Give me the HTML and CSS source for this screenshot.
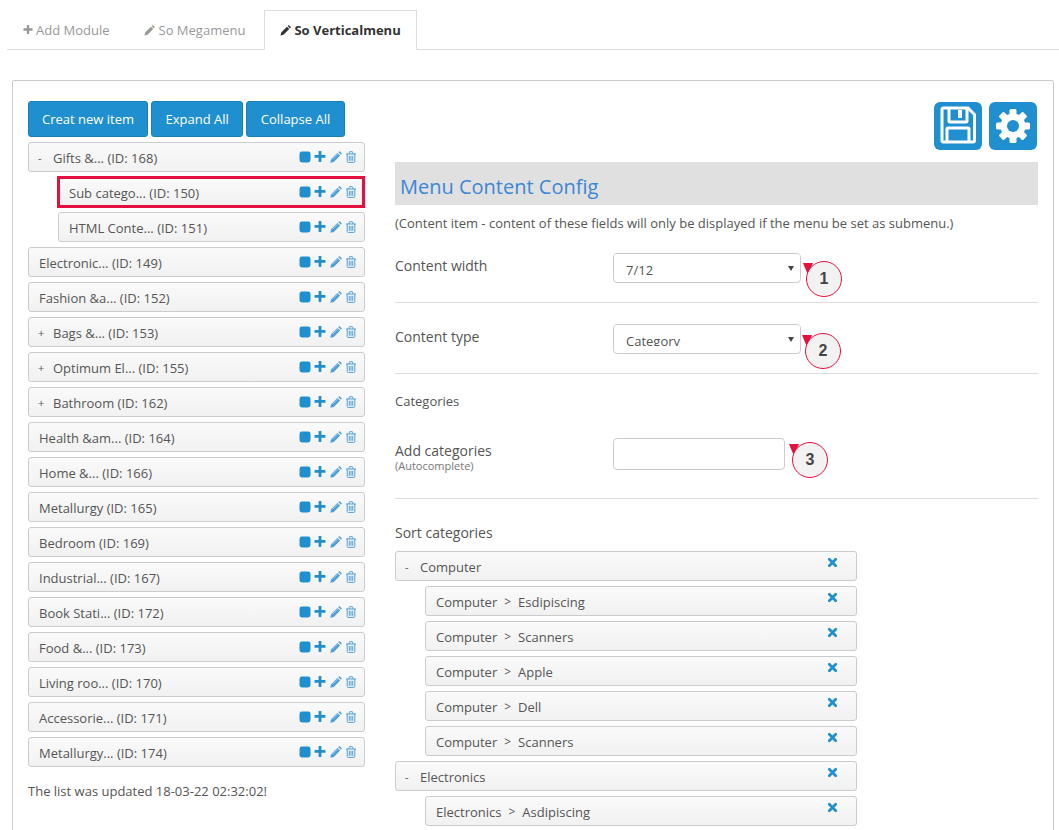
FILE: index.html
```html
<!DOCTYPE html>
<html lang="en">
<head>
  <meta charset="UTF-8" />
  <meta name="viewport" content="width=device-width, initial-scale=1.0" />
  <title>So Verticalmenu</title>
  <link rel="stylesheet" href="styles.css">
</head>
<body>
  <svg class="sprite" width="0" height="0">
    <symbol id="i-square" viewBox="0 0 12 12"><rect x="0.5" y="0.5" width="11" height="11" rx="2.4" fill="currentColor"/></symbol>
    <symbol id="i-plus" viewBox="0 0.6 12 12"><path d="M4.6 1.1q0-.6.6-.6h1.6q.6 0 .6.6v3.5h3.5q.6 0 .6.6v1.6q0 .6-.6.6H7.4v3.5q0 .6-.6.6H5.2q-.6 0-.6-.6V7.400H1.100q-.6 0-.6-.6V5.200q0-.6.6-.6h3.500z" fill="currentColor"/></symbol>
    <symbol id="i-pencil" viewBox="0 0 12 12"><path d="M0.300 11.700l.8-3.500 6.300-6.300 2.700 2.700-6.300 6.300zM8.200 1.100l.7-.6q.5-.4 1 0l1.600 1.600q.4.5 0 1l-.6.7z" fill="currentColor"/><path d="M2.400 8.300l5.400-5.400" stroke="#fff" stroke-width=".5"/></symbol>
    <symbol id="i-trash" viewBox="0 0 12 12"><path d="M1 3h10M2.200 3v7.400q0 1 1 1h5.600q1 0 1-1V3M4.200 3V1.400q0-.7.7-.7h2.200q.7 0 .7.7V3M4.300 4.800v5M6 4.800v5M7.700 4.800v5" fill="none" stroke="currentColor" stroke-width="1"/></symbol>
    <symbol id="i-edit" viewBox="0 0 12 12"><path d="M0.500 11.500l.8-3.300L7.600 1.900l2.500 2.500-6.300 6.300zM8.300 1.200l.7-.7q.5-.4 1 0l1.500 1.500q.4.5 0 1l-.7.700z" fill="currentColor"/></symbol>
    <symbol id="i-times" viewBox="0 0 12 12"><path d="M2.500 2.500l7 7M9.500 2.500l-7 7" stroke="currentColor" stroke-width="3" stroke-linecap="round"/></symbol>
  </svg>

  <ul class="tabs">
    <li><svg class="tab-ico add"><use href="#i-plus"/></svg>Add Module</li>
    <li><svg class="tab-ico"><use href="#i-edit"/></svg>So Megamenu</li>
    <li class="active"><svg class="tab-ico"><use href="#i-edit"/></svg>So Verticalmenu</li>
  </ul>

  <div class="panel">
    <div class="left-col">
      <div class="btn-row">
        <button class="btn">Creat new item</button>
        <button class="btn">Expand All</button>
        <button class="btn">Collapse All</button>
      </div>
      <ul class="tree">
        <li class="node"><span class="sign">-</span>Gifts &amp;... (ID: 168)<span class="acts"><svg><use href="#i-square"/></svg><svg><use href="#i-plus"/></svg><svg class="light"><use href="#i-pencil"/></svg><svg class="light"><use href="#i-trash"/></svg></span></li>
        <li class="node sub marked">Sub catego... (ID: 150)<span class="acts"><svg><use href="#i-square"/></svg><svg><use href="#i-plus"/></svg><svg class="light"><use href="#i-pencil"/></svg><svg class="light"><use href="#i-trash"/></svg></span></li>
        <li class="node sub">HTML Conte... (ID: 151)<span class="acts"><svg><use href="#i-square"/></svg><svg><use href="#i-plus"/></svg><svg class="light"><use href="#i-pencil"/></svg><svg class="light"><use href="#i-trash"/></svg></span></li>
        <li class="node">Electronic... (ID: 149)<span class="acts"><svg><use href="#i-square"/></svg><svg><use href="#i-plus"/></svg><svg class="light"><use href="#i-pencil"/></svg><svg class="light"><use href="#i-trash"/></svg></span></li>
        <li class="node">Fashion &amp;a... (ID: 152)<span class="acts"><svg><use href="#i-square"/></svg><svg><use href="#i-plus"/></svg><svg class="light"><use href="#i-pencil"/></svg><svg class="light"><use href="#i-trash"/></svg></span></li>
        <li class="node"><span class="sign">+</span>Bags &amp;... (ID: 153)<span class="acts"><svg><use href="#i-square"/></svg><svg><use href="#i-plus"/></svg><svg class="light"><use href="#i-pencil"/></svg><svg class="light"><use href="#i-trash"/></svg></span></li>
        <li class="node"><span class="sign">+</span>Optimum El... (ID: 155)<span class="acts"><svg><use href="#i-square"/></svg><svg><use href="#i-plus"/></svg><svg class="light"><use href="#i-pencil"/></svg><svg class="light"><use href="#i-trash"/></svg></span></li>
        <li class="node"><span class="sign">+</span>Bathroom (ID: 162)<span class="acts"><svg><use href="#i-square"/></svg><svg><use href="#i-plus"/></svg><svg class="light"><use href="#i-pencil"/></svg><svg class="light"><use href="#i-trash"/></svg></span></li>
        <li class="node">Health &amp;am... (ID: 164)<span class="acts"><svg><use href="#i-square"/></svg><svg><use href="#i-plus"/></svg><svg class="light"><use href="#i-pencil"/></svg><svg class="light"><use href="#i-trash"/></svg></span></li>
        <li class="node">Home &amp;... (ID: 166)<span class="acts"><svg><use href="#i-square"/></svg><svg><use href="#i-plus"/></svg><svg class="light"><use href="#i-pencil"/></svg><svg class="light"><use href="#i-trash"/></svg></span></li>
        <li class="node">Metallurgy (ID: 165)<span class="acts"><svg><use href="#i-square"/></svg><svg><use href="#i-plus"/></svg><svg class="light"><use href="#i-pencil"/></svg><svg class="light"><use href="#i-trash"/></svg></span></li>
        <li class="node">Bedroom (ID: 169)<span class="acts"><svg><use href="#i-square"/></svg><svg><use href="#i-plus"/></svg><svg class="light"><use href="#i-pencil"/></svg><svg class="light"><use href="#i-trash"/></svg></span></li>
        <li class="node">Industrial... (ID: 167)<span class="acts"><svg><use href="#i-square"/></svg><svg><use href="#i-plus"/></svg><svg class="light"><use href="#i-pencil"/></svg><svg class="light"><use href="#i-trash"/></svg></span></li>
        <li class="node">Book Stati... (ID: 172)<span class="acts"><svg><use href="#i-square"/></svg><svg><use href="#i-plus"/></svg><svg class="light"><use href="#i-pencil"/></svg><svg class="light"><use href="#i-trash"/></svg></span></li>
        <li class="node">Food &amp;... (ID: 173)<span class="acts"><svg><use href="#i-square"/></svg><svg><use href="#i-plus"/></svg><svg class="light"><use href="#i-pencil"/></svg><svg class="light"><use href="#i-trash"/></svg></span></li>
        <li class="node">Living roo... (ID: 170)<span class="acts"><svg><use href="#i-square"/></svg><svg><use href="#i-plus"/></svg><svg class="light"><use href="#i-pencil"/></svg><svg class="light"><use href="#i-trash"/></svg></span></li>
        <li class="node">Accessorie... (ID: 171)<span class="acts"><svg><use href="#i-square"/></svg><svg><use href="#i-plus"/></svg><svg class="light"><use href="#i-pencil"/></svg><svg class="light"><use href="#i-trash"/></svg></span></li>
        <li class="node">Metallurgy... (ID: 174)<span class="acts"><svg><use href="#i-square"/></svg><svg><use href="#i-plus"/></svg><svg class="light"><use href="#i-pencil"/></svg><svg class="light"><use href="#i-trash"/></svg></span></li>
      </ul>
      <p class="updated">The list was updated 18-03-22 02:32:02!</p>
    </div>

    <div class="right-col">
      <div class="toolbar">
        <button class="tool" aria-label="Save">
          <svg viewBox="0 0 48 48"><path d="M8 7.500q0-1.500 1.500-1.500H34l6.500 6.500v26q0 1.500-1.500 1.500H9.500Q8 40 8 38.500z" fill="none" stroke="#fff" stroke-width="3"/><path d="M15 6.500V19q0 1 1 1h16q1 0 1-1V6.500" fill="none" stroke="#fff" stroke-width="3"/><rect x="24" y="8" width="4" height="8" fill="#fff"/><path d="M13 39V27q0-1 1-1h20q1 0 1 1v12" fill="none" stroke="#fff" stroke-width="3"/></svg>
        </button>
        <button class="tool" aria-label="Settings">
          <svg viewBox="0 0 48 48">
            <g fill="#fff">
              <rect x="20.500" y="7" width="7" height="34" rx="1.500"/>
              <rect x="20.500" y="7" width="7" height="34" rx="1.500" transform="rotate(45 24 24)"/>
              <rect x="20.500" y="7" width="7" height="34" rx="1.500" transform="rotate(90 24 24)"/>
              <rect x="20.500" y="7" width="7" height="34" rx="1.500" transform="rotate(135 24 24)"/>
              <circle cx="24" cy="24" r="12.500"/>
            </g>
            <circle cx="24" cy="24" r="6" fill="#1f8fcf"/>
          </svg>
        </button>
      </div>

      <h2 class="config-title">Menu Content Config</h2>
      <p class="note">(Content item - content of these fields will only be displayed if the menu be set as submenu.)</p>

      <div class="form-row width-row">
        <label class="field-label">Content width</label>
        <div class="control">
          <div class="select-box"><select><option>7/12</option></select></div>
          <span class="flag"></span>
          <span class="marker">1</span>
        </div>
      </div>

      <div class="form-row type-row">
        <label class="field-label">Content type</label>
        <div class="control">
          <div class="select-box"><select><option>Category</option></select></div>
          <span class="flag"></span>
          <span class="marker">2</span>
        </div>
      </div>

      <div class="cat-head">Categories</div>

      <div class="form-row add-row">
        <label class="field-label">Add categories<small>(Autocomplete)</small></label>
        <div class="control">
          <input class="text-input" type="text">
          <span class="flag"></span>
          <span class="marker">3</span>
        </div>
      </div>

      <div class="sort-head">Sort categories</div>
      <ul class="sort-list">
        <li class="node"><span class="sign">-</span>Computer<span class="acts"><svg class="times"><use href="#i-times"/></svg></span></li>
        <li class="node sub">Computer<i class="gt">&gt;</i>Esdipiscing<span class="acts"><svg class="times"><use href="#i-times"/></svg></span></li>
        <li class="node sub">Computer<i class="gt">&gt;</i>Scanners<span class="acts"><svg class="times"><use href="#i-times"/></svg></span></li>
        <li class="node sub">Computer<i class="gt">&gt;</i>Apple<span class="acts"><svg class="times"><use href="#i-times"/></svg></span></li>
        <li class="node sub">Computer<i class="gt">&gt;</i>Dell<span class="acts"><svg class="times"><use href="#i-times"/></svg></span></li>
        <li class="node sub">Computer<i class="gt">&gt;</i>Scanners<span class="acts"><svg class="times"><use href="#i-times"/></svg></span></li>
        <li class="node"><span class="sign">-</span>Electronics<span class="acts"><svg class="times"><use href="#i-times"/></svg></span></li>
        <li class="node sub">Electronics<i class="gt">&gt;</i>Asdipiscing<span class="acts"><svg class="times"><use href="#i-times"/></svg></span></li>
      </ul>
    </div>
  </div>
</body>
</html>
```

FILE: styles.css
```css
html, body {
  height: 830px;
  overflow: hidden;
}
body {
  margin: 0;
  padding: 10px 0 0 7px;
  box-sizing: border-box;
  font-family: "Open Sans", sans-serif;
  font-size: 13px;
  color: #555;
  background: #fff;
}
ul {
  list-style: none;
  margin: 0;
  padding: 0;
}
.sprite {
  position: absolute;
}

/* tabs */
.tabs {
  display: flex;
  height: 40px;
  box-sizing: border-box;
  border-bottom: 1px solid #ddd;
}
.tabs li {
  display: flex;
  align-items: center;
  height: 40px;
  box-sizing: border-box;
  padding: 0 15px;
  margin-right: 2px;
  color: #999;
  border: 1px solid transparent;
}
.tabs li.active {
  margin-left: 1px;
  padding: 0 15px;
  background: #fff;
  color: #333;
  font-weight: 700;
  border-color: #ddd;
  border-bottom-color: #fff;
}
.tab-ico {
  width: 11px;
  height: 11px;
  margin-right: 4px;
}
.tab-ico.add {
  width: 10px;
  height: 10px;
  margin-right: 3px;
}
.tabs li.active .tab-ico {
  margin-right: 3px;
}

/* main panel */
.panel {
  display: grid;
  grid-template-columns: 337px 643px;
  column-gap: 30px;
  width: 1042px;
  box-sizing: border-box;
  margin: 30px 0 0 5px;
  padding: 20px 15px;
  border: 1px solid #ccc;
  border-radius: 2px;
  height: 900px;
}

/* buttons */
.btn-row {
  display: flex;
  gap: 3px;
  margin-bottom: 5px;
}
.btn {
  height: 36px;
  padding: 0 13px;
  border: 1px solid #1a7fb8;
  border-radius: 3px;
  background: #1f8fcf;
  color: #fff;
  font: 13px "Open Sans", sans-serif;
}
.btn + .btn {
  padding: 0 13.5px;
}

/* tree rows */
.node {
  display: flex;
  align-items: center;
  height: 30px;
  box-sizing: border-box;
  margin-bottom: 5px;
  padding: 1px 7px 0 10px;
  border: 1px solid #ccc;
  border-radius: 3px;
  background: linear-gradient(#fafafa, #f1f1f1);
  color: #555;
  white-space: pre;
}
.node.sub {
  margin-left: 30px;
}
.node.marked {
  position: relative;
}
.node.marked::after {
  content: "";
  position: absolute;
  top: -2px;
  right: -1px;
  bottom: -2px;
  left: -2px;
  border: 3px solid #e6103f;
}
.sign {
  width: 15px;
  margin-left: -1px;
  font-size: 11px;
}
.acts {
  display: flex;
  gap: 3.5px;
  margin-left: auto;
  margin-top: -2px;
  color: #1f8fcf;
}
.acts svg {
  width: 12px;
  height: 12px;
}
.acts svg.light {
  color: #4f9fd8;
}
.updated {
  margin: 15px 0 0;
  line-height: 18px;
}

/* right column */
.toolbar {
  display: flex;
  justify-content: flex-end;
  gap: 7px;
  height: 48px;
  margin: 1px 1px 12px 0;
}
.tool {
  width: 48px;
  height: 48px;
  padding: 0;
  border: none;
  border-radius: 6px;
  background: #1f8fcf;
}
.tool svg {
  display: block;
  width: 48px;
  height: 48px;
}
.config-title {
  height: 43px;
  margin: 0;
  padding: 11px 0 0 5px;
  box-sizing: border-box;
  background: #e0e0e0;
  color: #3a87d6;
  font-size: 20px;
  font-weight: 400;
  line-height: 28px;
}
.note {
  margin: 9px 0 0;
  line-height: 18px;
}
.form-row {
  display: flex;
  padding: 21px 0 19px;
  border-bottom: 1px solid #ddd;
}
.field-label {
  width: 218px;
  font-size: 14px;
  line-height: 26px;
}
.field-label small {
  display: block;
  margin-top: -5px;
  font-size: 11px;
  line-height: 14px;
  color: #777;
}
.control {
  position: relative;
}
.select-box {
  position: relative;
  width: 188px;
  height: 30px;
  box-sizing: border-box;
  border: 1px solid #ccc;
  border-radius: 4px;
  overflow: hidden;
}
.select-box::after {
  content: "";
  position: absolute;
  top: 12px;
  right: 6px;
  border: 3.5px solid transparent;
  border-top: 5px solid #444;
  border-bottom: 0;
}
.select-box select {
  display: block;
  width: 100%;
  height: 21px;
  padding: 7px 12px 0;
  border: none;
  outline: none;
  background: #fff;
  appearance: none;
  font: 13px/19px "Open Sans", sans-serif;
  color: #555;
}
.text-input {
  display: block;
  width: 172px;
  height: 32px;
  box-sizing: border-box;
  border: 1px solid #ccc;
  border-radius: 4px;
}
.flag {
  position: absolute;
  top: 10px;
  left: 190px;
  width: 0;
  height: 0;
  border-top: 12px solid #e6103f;
  border-left: 5px solid transparent;
  border-right: 5px solid transparent;
}
.marker {
  position: absolute;
  top: 8px;
  left: 193px;
  width: 36px;
  height: 36px;
  box-sizing: border-box;
  border: 1px solid #e6103f;
  border-radius: 50%;
  background: #f2f2f2;
  color: #444;
  font: 700 16px/34px "Liberation Sans", sans-serif;
  text-align: center;
}
.type-row .flag {
  top: 11px;
  left: 189px;
}
.type-row .marker {
  top: 9px;
  left: 192px;
}
.cat-head {
  margin-top: 18px;
  line-height: 18px;
}
.add-row {
  padding: 28px 0 25px;
}
.add-row .flag {
  top: 6px;
  left: 176px;
}
.add-row .marker {
  top: 4px;
  left: 179px;
}
.sort-head {
  margin-top: 25px;
  font-size: 14px;
  line-height: 18px;
}
.sort-list {
  width: 462px;
  margin-top: 9px;
}
.sort-list .acts {
  padding-right: 11px;
  margin-top: -8px;
}
.acts .times {
  width: 11px;
  height: 11px;
}
.gt {
  margin: 0 7px;
  font-style: normal;
  font-size: 12px;
}
```
